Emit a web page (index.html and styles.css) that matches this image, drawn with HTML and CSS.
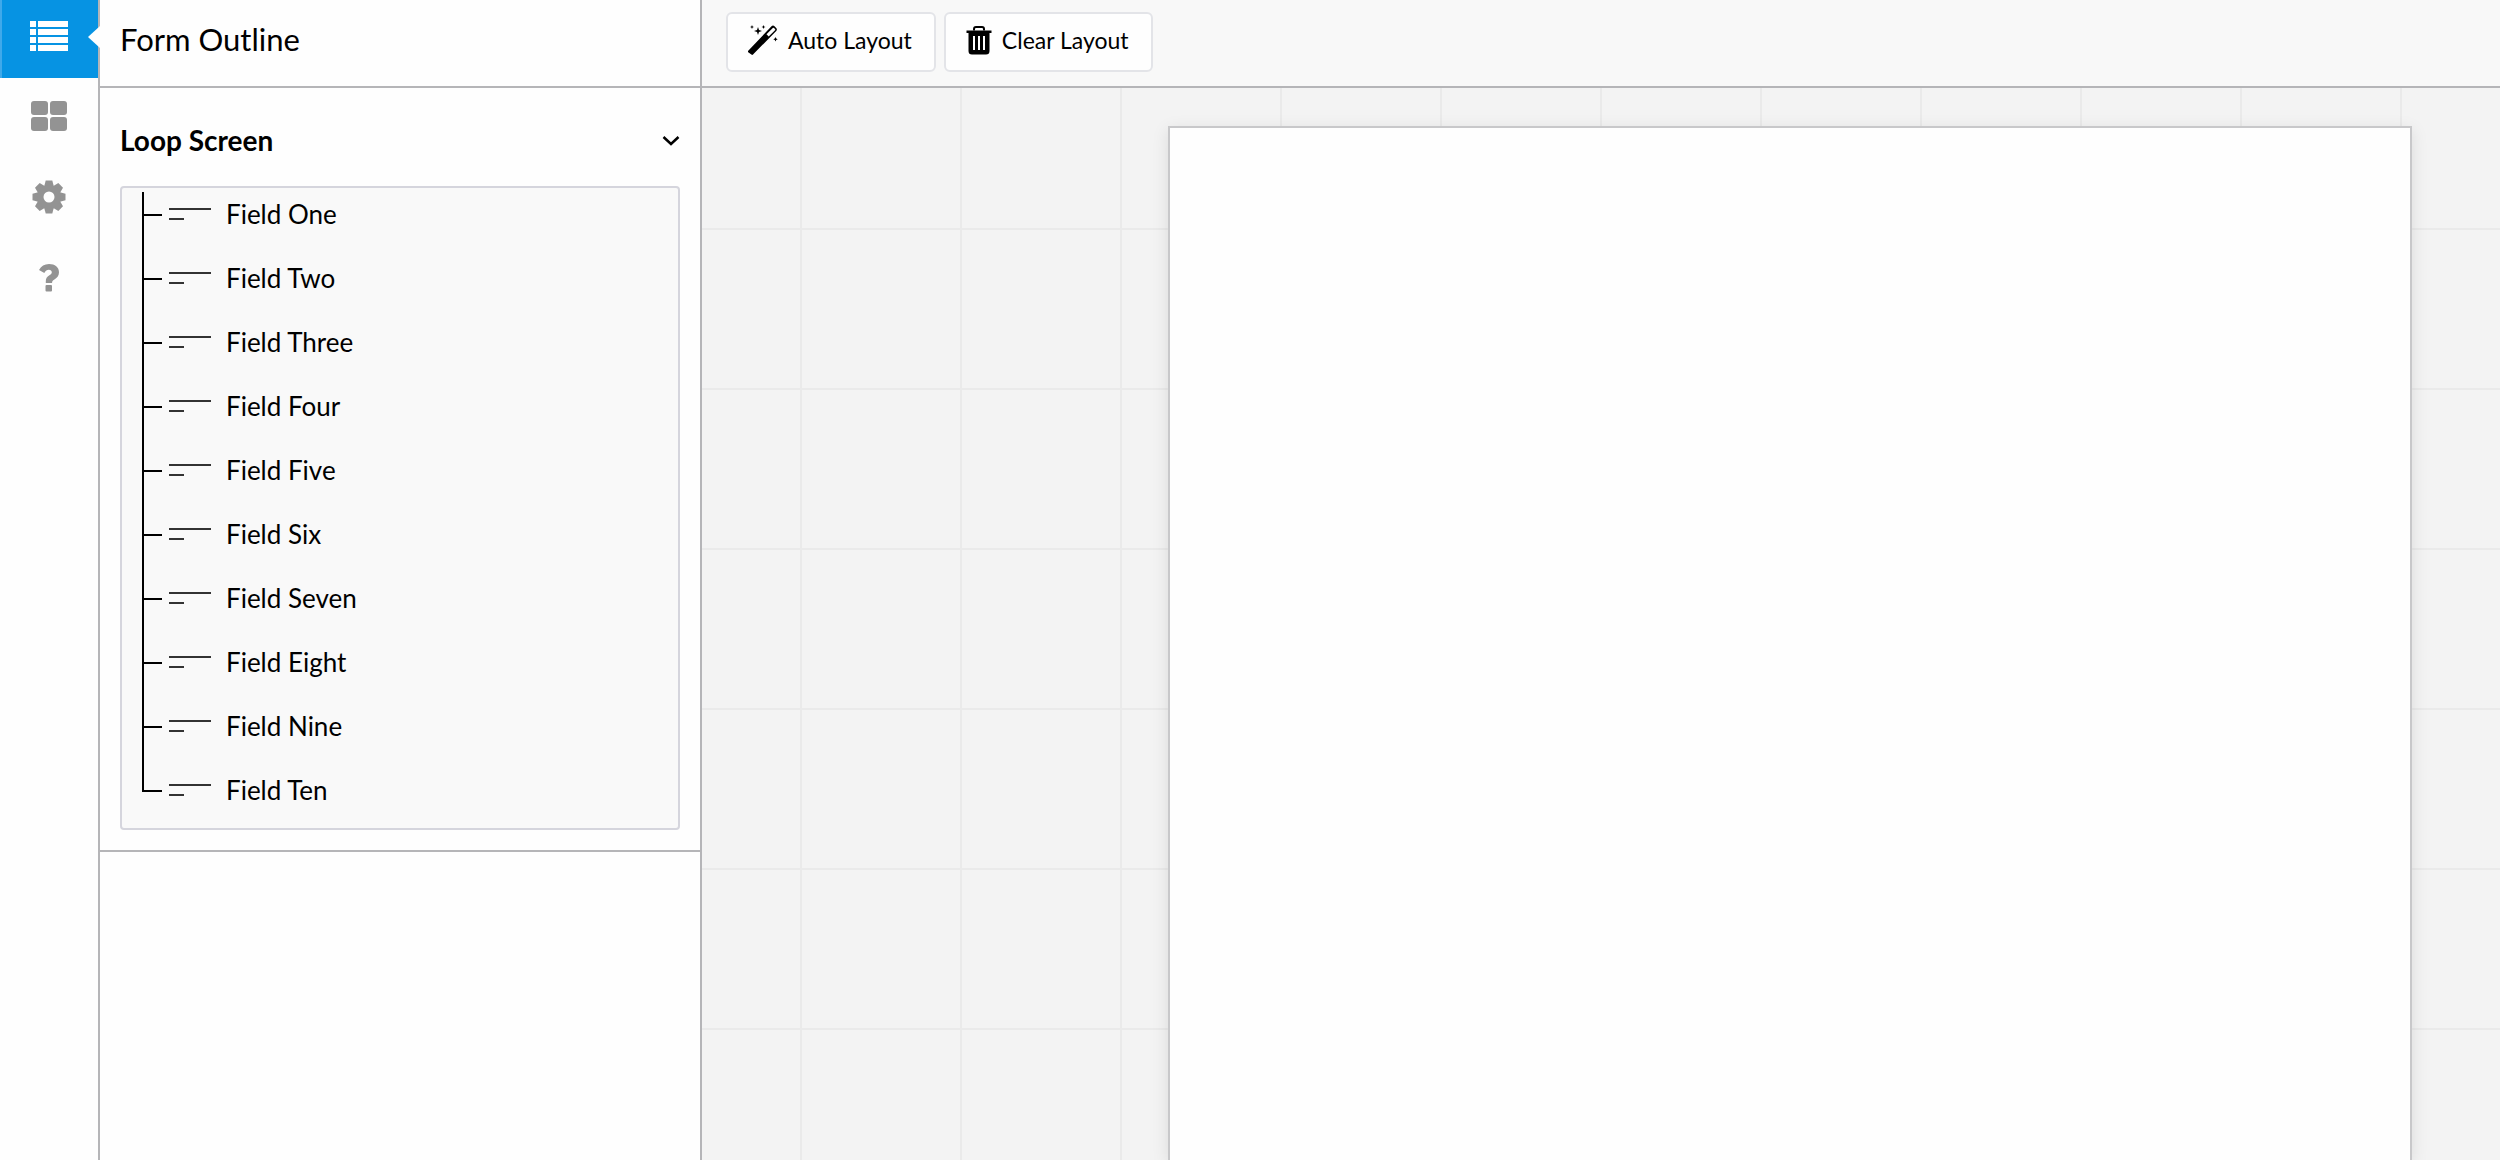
FILE: index.html
```html
<!DOCTYPE html>
<html lang="en">
  <head>
    <meta charset="UTF-8" />
    <meta name="viewport" content="width=device-width, initial-scale=1.0" />
    <title>Form Outline</title>
    <link rel="stylesheet" href="styles.css">
  </head>
  <body>
    <div class="app">
      <nav class="rail">
        <button type="button" class="rail-btn active" aria-label="Form outline">
          <svg width="38" height="30" viewBox="0 0 38 30" fill="currentColor">
            <path d="M0 0h6v6H0zM8 0h30v6H8zM0 8h6v6H0zM8 8h30v6H8zM0 16h6v6H0zM8 16h30v6H8zM0 24h6v6H0zM8 24h30v6H8z" />
          </svg>
        </button>
        <button type="button" class="rail-btn" aria-label="Widgets">
          <svg width="36" height="30" viewBox="0 0 36 30" fill="currentColor">
            <rect width="17" height="14" rx="3" />
            <rect x="19" width="17" height="14" rx="3" />
            <rect y="16" width="17" height="14" rx="3" />
            <rect x="19" y="16" width="17" height="14" rx="3" />
          </svg>
        </button>
        <button type="button" class="rail-btn" aria-label="Settings">
          <svg width="34" height="34" viewBox="-17 -17 34 34">
            <g fill="currentColor">
              <path id="tooth" d="M-5-10L-3.300-16.500H3.300L5-10V10L3.300 16.500H-3.300L-5 10z" />
              <use href="#tooth" transform="rotate(45)" />
              <use href="#tooth" transform="rotate(90)" />
              <use href="#tooth" transform="rotate(135)" />
              <circle r="12" />
            </g>
            <circle r="5.500" fill="#fefefe" />
          </svg>
        </button>
        <button type="button" class="rail-btn" aria-label="Help">
          <svg width="20" height="28" viewBox="0 0 20 28" fill="currentColor">
            <path d="M0 6C2 2 5.500 0 10 0c6 0 10 3.300 10 8.200 0 3.400-1.700 5.400-4.600 7.200-1.800 1.100-2.300 1.700-2.300 3V19H6.800v-1.500c0-3 1-4.500 3.600-6.200 1.800-1.200 2.400-1.800 2.400-3.100 0-1.600-1.200-2.500-3-2.500-1.900 0-3.200.9-4.500 3.200z" />
            <rect x="6.500" y="21" width="6.500" height="6.500" rx="1" />
          </svg>
        </button>
      </nav>

      <aside class="panel">
        <header class="panel-header">
          <h1>Form Outline</h1>
        </header>
        <section class="screen">
          <button type="button" class="screen-toggle" aria-expanded="true">
            Loop Screen
            <svg width="18" height="12" viewBox="0 0 18 12" fill="none" stroke="currentColor" stroke-width="2.500">
              <path d="M1.500 3L9 10l7.500-7" />
            </svg>
          </button>
          <ul class="fields">
            <li><span class="field-icon"></span>Field One</li>
            <li><span class="field-icon"></span>Field Two</li>
            <li><span class="field-icon"></span>Field Three</li>
            <li><span class="field-icon"></span>Field Four</li>
            <li><span class="field-icon"></span>Field Five</li>
            <li><span class="field-icon"></span>Field Six</li>
            <li><span class="field-icon"></span>Field Seven</li>
            <li><span class="field-icon"></span>Field Eight</li>
            <li><span class="field-icon"></span>Field Nine</li>
            <li><span class="field-icon"></span>Field Ten</li>
          </ul>
        </section>
      </aside>

      <main class="editor">
        <div class="toolbar">
          <button type="button" class="tool-btn">
            <svg width="30" height="30" viewBox="0 0 30 30" fill="currentColor">
              <path fill-rule="evenodd" d="M0 26L23.500 1.300Q25-.3 26.500 1.300L28.200 3Q29.600 4.500 28.200 6L5 29.500Q4.200 30.300 3.400 29.500L.2 27.200Q-.5 26.600 0 26zM18.500 9.200l2.200 2.200L27 5.200Q27.600 4.500 27 3.900L26 3Q25.400 2.500 24.800 3.100z" />
              <path d="M10 2l1 3 3 1-3 1-1 3-1-3-3-1 3-1zM4 0l.6 1.400L6 2l-1.400.6L4 4l-.6-1.400L2 2l1.400-.6zM15.500 0l.6 1.400 1.400.6-1.400.6-.6 1.400-.6-1.400-1.400-.6 1.400-.6zM27.500 12l.7 1.500 1.500.7-1.500.7-.7 1.500-.7-1.500-1.500-.7 1.500-.7z" />
            </svg>
            Auto Layout
          </button>
          <button type="button" class="tool-btn">
            <svg width="26" height="30" viewBox="0 0 26 30">
              <path fill="none" stroke="currentColor" stroke-width="2" d="M8 5.500V4q0-2 2-2h6q2 0 2 2v1.500" />
              <path fill="currentColor" d="M.5 5.500h25v2.500h-2V26q0 3.500-3.500 3.500H6Q2.500 29.500 2.500 26V8h-2z" />
              <path fill="none" stroke="#fff" stroke-width="2" d="M8 11v14M13 11v14M18 11v14" />
            </svg>
            Clear Layout
          </button>
        </div>
        <div class="canvas">
          <div class="page"></div>
        </div>
      </main>
    </div>
  </body>
</html>
```

FILE: styles.css
```css
*,
*::before,
*::after {
  box-sizing: border-box;
}
body {
  margin: 0;
  font-family: Lato, "Open Sans", sans-serif;
  font-size: 26px;
  color: #000;
  background: #fefefe;
}
button {
  font: inherit;
  color: inherit;
  cursor: pointer;
}
.app {
  display: flex;
  min-height: 100vh;
}

/* left icon rail */
.rail {
  flex: 0 0 100px;
  border-right: 2px solid #b5b5b8;
}
.rail-btn {
  position: relative;
  display: flex;
  align-items: center;
  justify-content: center;
  width: 100%;
  height: 81px;
  padding: 0;
  border: none;
  background: none;
  color: #939393;
}
.rail-btn.active {
  height: 78px;
  margin-bottom: -3px;
  padding-bottom: 6px;
  background: #0693e3;
  box-shadow: inset 2px 0 #3fa9ea;
  color: #fff;
}
.rail-btn.active::after {
  content: "";
  position: absolute;
  top: 26px;
  right: -2px;
  border: 11px solid transparent;
  border-left: none;
  border-right: 12px solid #fefefe;
}

/* outline panel */
.panel {
  flex: 0 0 602px;
  border-right: 2px solid #b5b5b8;
}
.panel-header {
  height: 88px;
  padding: 0 20px;
  border-bottom: 2px solid #b5b5b8;
}
h1 {
  margin: 0;
  font-size: 31px;
  font-weight: 400;
  line-height: 78px;
}
.screen {
  padding: 20px;
  border-bottom: 2px solid #b5b5b8;
}
.screen-toggle {
  display: flex;
  align-items: center;
  justify-content: space-between;
  width: 100%;
  height: 64px;
  margin-bottom: 14px;
  padding: 0;
  border: none;
  background: none;
  font-size: 28px;
  font-weight: 700;
}
.fields {
  display: grid;
  gap: 20px;
  margin: 0;
  padding: 4px 20px 16px;
  border: 2px solid #d5d5dd;
  border-radius: 4px;
  background: #f9f9f9;
  list-style: none;
}
.fields li {
  position: relative;
  display: flex;
  align-items: center;
  gap: 15px;
  height: 44px;
  padding-left: 27px;
}
/* tree connector */
.fields li::before {
  content: "";
  position: absolute;
  left: 0;
  top: -40px;
  width: 20px;
  height: 64px;
  border-left: 2px solid #000;
  border-bottom: 2px solid #000;
}
.fields li:first-child::before {
  top: 0;
  height: 24px;
}
.field-icon {
  width: 42px;
  height: 12px;
  border-top: 2px solid #333;
  background: linear-gradient(#333, #333) 0 100% / 15px 2px no-repeat;
}

/* editor */
.editor {
  flex: 1;
  display: flex;
  flex-direction: column;
}
.toolbar {
  display: flex;
  gap: 8px;
  height: 88px;
  padding: 12px 24px;
  border-bottom: 2px solid #b5b5b8;
  background: #f8f8f8;
}
.tool-btn {
  display: flex;
  align-items: center;
  gap: 10px;
  height: 60px;
  padding: 0 22px 4px 20px;
  border: 2px solid #e3e4e8;
  border-radius: 6px;
  background: #fefefe;
  font-size: 23px;
}
.canvas {
  flex: 1;
  display: flex;
  justify-content: flex-end;
  padding: 38px 88px 0 0;
  background-color: #f3f3f3;
  background-image:
    linear-gradient(90deg, #eaeaea 2px, transparent 2px),
    linear-gradient(#eaeaea 2px, transparent 2px);
  background-position: 98px 140px;
  background-size: 160px 160px;
}
.page {
  width: 1244px;
  max-width: 100%;
  border: 2px solid #c8c8ca;
  border-bottom: none;
  background: #fefefe;
  box-shadow: 0 4px 16px rgba(0, 0, 0, 0.1);
}
```
